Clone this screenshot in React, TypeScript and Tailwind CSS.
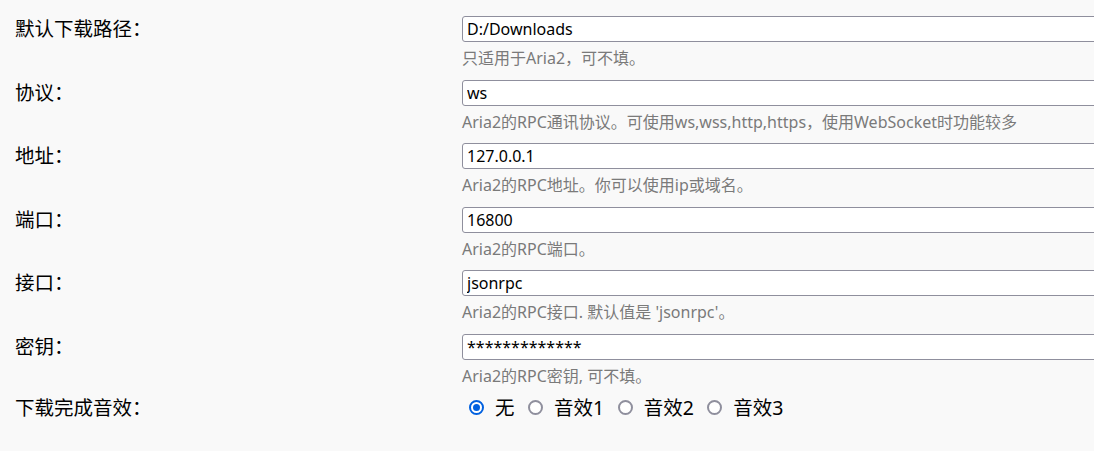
import React from 'react';

const fields = [
  { label: '默认下载路径：', value: 'D:/Downloads', hint: '只适用于Aria2，可不填。' },
  { label: '协议：', value: 'ws', hint: 'Aria2的RPC通讯协议。可使用ws,wss,http,https，使用WebSocket时功能较多' },
  { label: '地址：', value: '127.0.0.1', hint: 'Aria2的RPC地址。你可以使用ip或域名。' },
  { label: '端口：', value: '16800', hint: 'Aria2的RPC端口。' },
  { label: '接口：', value: 'jsonrpc', hint: "Aria2的RPC接口. 默认值是 'jsonrpc'。" },
  { label: '密钥：', value: '*************', hint: 'Aria2的RPC密钥, 可不填。' },
];

const sounds = ['无', '音效1', '音效2', '音效3'];

function Radio({ checked }: { checked: boolean }) {
  if (checked) {
    return (
      <span className="flex h-[15px] w-[15px] items-center justify-center rounded-full border-2 border-[#0060df] bg-white">
        <span className="h-[7px] w-[7px] rounded-full bg-[#0060df]" />
      </span>
    );
  }
  return <span className="h-[15px] w-[15px] rounded-full border-2 border-[#8f8f9d] bg-white" />;
}

export default function App() {
  const font = { fontFamily: '"Noto Sans", "Noto Sans CJK SC", sans-serif' };
  return (
    <div className="h-[451px] w-full overflow-hidden bg-[#f9f9f9] pl-[15px] pt-[16px] text-black" style={font}>
      {fields.map((f, i) => (
        <div key={i} className="grid grid-cols-[447px_1fr] pb-[11.6px]">
          <div className="text-[19.5px] leading-[26px]">{f.label}</div>
          <div>
            <input
              readOnly
              value={f.value}
              className="block h-[26px] w-[800px] rounded-[3px] border border-[#8f8f9d] bg-white px-[4px] text-[16px] text-black outline-none"
            />
            <div className="mt-[6px] whitespace-nowrap text-[16px] leading-[20px] text-[#7a7a7a]">{f.hint}</div>
          </div>
        </div>
      ))}
      <div className="grid grid-cols-[447px_1fr]">
        <div className="text-[19.5px] leading-[20px]">下载完成音效：</div>
        <div className="flex items-center pl-[7px] text-[19.5px] leading-[20px]">
          {sounds.map((s, i) => (
            <label key={i} className="mr-[13.5px] flex items-center">
              <Radio checked={i === 0} />
              <span className="ml-[11px]">{s}</span>
            </label>
          ))}
        </div>
      </div>
    </div>
  );
}
